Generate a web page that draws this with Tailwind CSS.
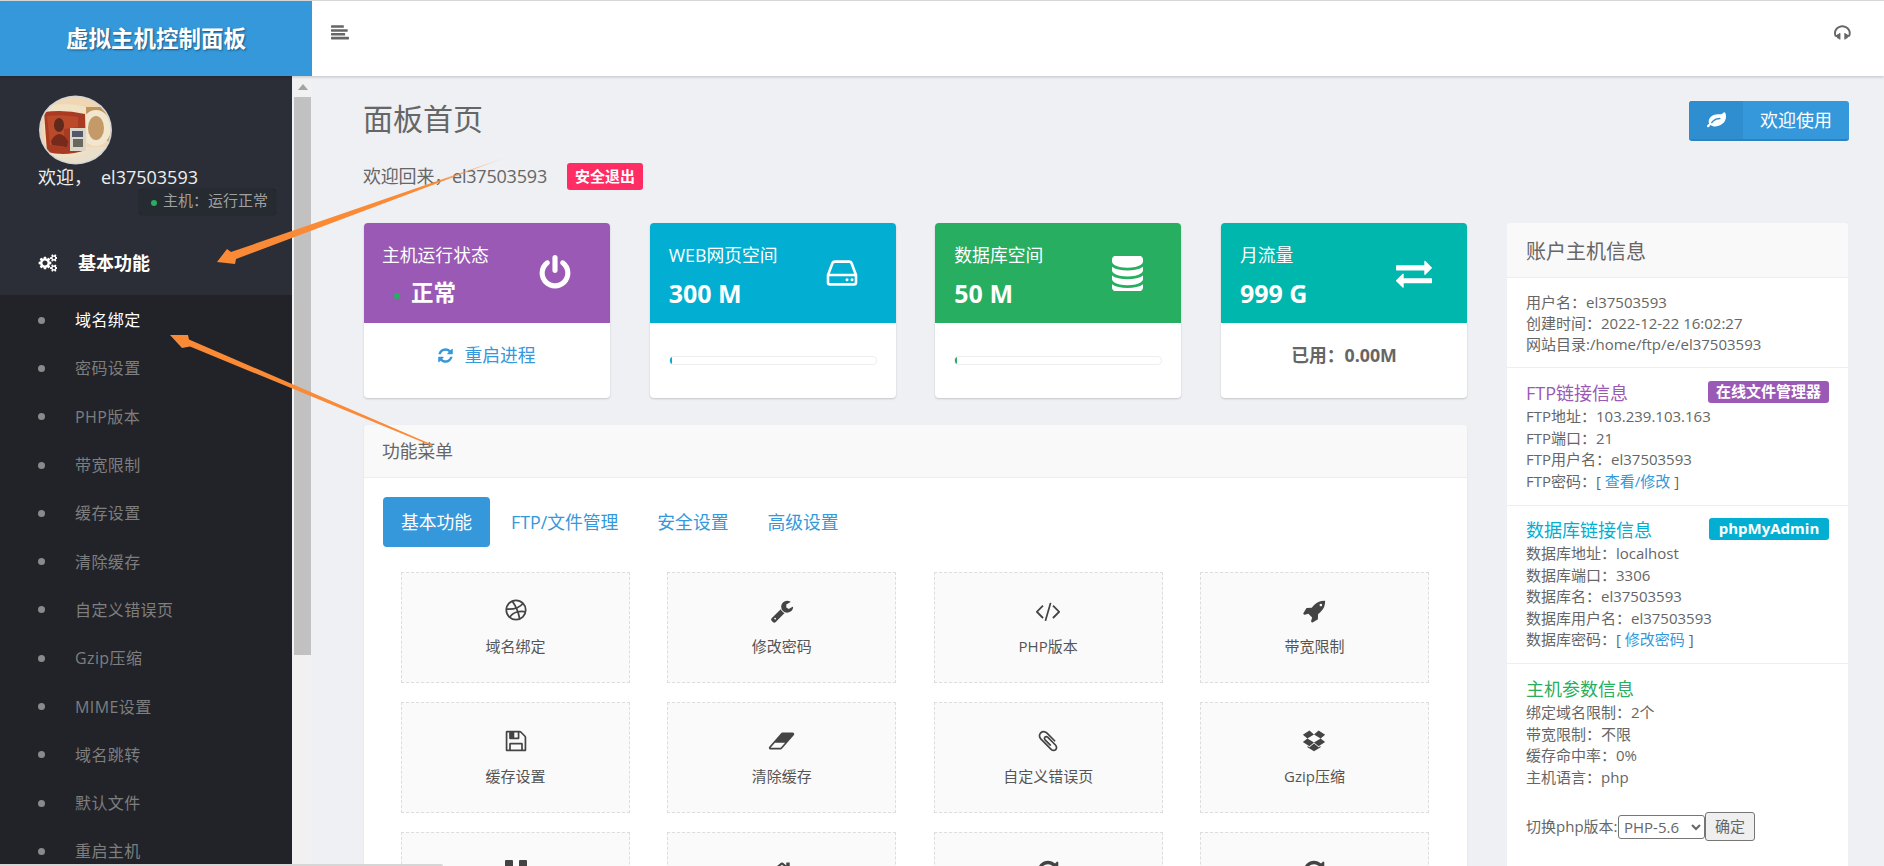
<!DOCTYPE html>
<html lang="zh-CN">

<head>
    <meta charset="UTF-8" />
    <meta name="viewport" content="width=device-width, initial-scale=1.0" />
    <title>虚拟主机控制面板</title>
    <script src="https://cdn.jsdelivr.net/npm/@tailwindcss/browser@4"></script>
</head>

<body class="relative h-[866px] w-[1884px] overflow-hidden bg-[#eef0f4] font-['Open_Sans','Noto_Sans_CJK_SC',sans-serif] text-[15px] text-[#666]">

    <div class="h-px bg-[#ddd]"></div>

    <!-- top bar -->
    <header class="relative z-10 flex h-[75px] bg-white shadow-[0_1px_3px_rgba(0,0,0,0.2)]">
        <div class="flex w-[312px] items-center justify-center text-[22.5px] font-bold text-white bg-[#3498db] [text-shadow:1px_1px_2px_rgba(0,0,0,0.45)]">虚拟主机控制面板</div>
        <div class="flex flex-1 items-center justify-between pl-[19px] pr-[32px] pb-[11px]">
            <svg class="h-[18px] w-[18px] fill-[#666]" viewBox="0 0 1792 1792"><path d="M1792 1344v128q0 26-19 45t-45 19h-1664q-26 0-45-19t-19-45v-128q0-26 19-45t45-19h1664q26 0 45 19t19 45zm-384-384v128q0 26-19 45t-45 19h-1280q-26 0-45-19t-19-45v-128q0-26 19-45t45-19h1280q26 0 45 19t19 45zm256-384v128q0 26-19 45t-45 19h-1536q-26 0-45-19t-19-45v-128q0-26 19-45t45-19h1536q26 0 45 19t19 45zm-384-384v128q0 26-19 45t-45 19h-1152q-26 0-45-19t-19-45v-128q0-26 19-45t45-19h1152q26 0 45 19t19 45z"/></svg>
            <svg class="h-[18px] w-[18px] fill-[#666]" viewBox="0 0 1792 1792"><path d="M1664 890q0 166-60 314l-20 49-185 33q-22 83-90.5 136.5t-156.5 53.5v32q0 14-9 23t-23 9h-64q-14 0-23-9t-9-23v-576q0-14 9-23t23-9h64q14 0 23 9t9 23v32q71 0 130 35.5t93 95.5l68-12q29-95 29-193 0-148-88-279t-236.5-209-315.5-78-315.5 78-236.5 209-88 279q0 98 29 193l68 12q34-60 93-95.5t130-35.5v-32q0-14 9-23t23-9h64q14 0 23 9t9 23v576q0 14-9 23t-23 9h-64q-14 0-23-9t-9-23v-32q-88 0-156.5-53.5t-90.5-136.5l-185-33-20-49q-60-148-60-314 0-151 67-291t179-242.5 266-163.5 320-61 320 61 266 163.5 179 242.5 67 291z"/></svg>
        </div>
    </header>

    <div class="flex h-[790px] overflow-hidden">
        <!-- sidebar -->
        <aside class="w-[292px] shrink-0 overflow-hidden bg-[#212329]">
            <div class="h-[219px] bg-[#2b2e37] pl-[38px] pt-[19px]">
                <svg class="block h-[70px] w-[75px]" viewBox="0 0 75 70">
                    <defs>
                        <clipPath id="avatarClip"><ellipse cx="37.5" cy="35" rx="35" ry="33" /></clipPath>
                        <filter id="avatarBlur"><feGaussianBlur stdDeviation="0.7" /></filter>
                    </defs>
                    <ellipse cx="37.5" cy="35" rx="36.5" ry="34.5" fill="#d5d5d5" />
                    <g clip-path="url(#avatarClip)">
                        <g filter="url(#avatarBlur)">
                            <rect width="75" height="70" fill="#eed7b2" />
                            <rect x="45" y="12" width="30" height="34" fill="#bf955f" />
                            <rect y="52" width="75" height="18" fill="#e9dfcb" />
                            <ellipse cx="58" cy="33" rx="15" ry="18" fill="#f2e6cf" />
                            <ellipse cx="58" cy="33" rx="8" ry="12" fill="#c39a68" />
                            <path d="M5 12 Q26 6 48 12 L49 58 Q28 66 8 60 Z" fill="#f1e2c6" />
                            <path d="M6 17 Q26 14 47 19 L48 55 Q28 62 9 57 Z" fill="#a83a22" />
                            <path d="M9 21 Q24 19 40 22 L40 32 L26 34 L26 52 L12 50 Z" fill="#bb4a2b" />
                            <ellipse cx="21" cy="30" rx="5" ry="7" fill="#5e2a1c" />
                            <path d="M13 46 Q21 32 30 46 L29 52 L14 50 Z" fill="#74291a" />
                            <rect x="32" y="33" width="16" height="23" fill="#dbd6c8" />
                            <rect x="34" y="36" width="11" height="6" fill="#55586a" />
                            <rect x="35" y="44" width="10" height="8" fill="#68685f" />
                        </g>
                    </g>
                </svg>
                <div class="flex h-[24px] items-center text-[18px] text-[#eee]">
                    <span class="w-[63px] shrink-0">欢迎，</span><span>el37503593</span>
                </div>
                <div class="ml-[101px] flex h-[26px] w-[137px] items-center rounded-[4px] bg-[#262a31] pb-[3px] pl-[12px] text-[15px] text-[#a0a0a0] shadow-[0_0_1px_rgba(0,0,0,0.6)]">
                    <span class="mr-[6px] mt-[5px] h-[6px] w-[6px] shrink-0 rounded-full bg-[#27ae60]"></span>主机：运行正常
                </div>
                <div class="mt-[37px] flex h-[22px] items-center text-[18px] font-bold text-white">
                    <svg class="mr-[21px] h-[18px] w-[19px] fill-white" viewBox="0 0 1920 1792"><path d="M960 896q0-106-75-181t-181-75-181 75-75 181 75 181 181 75 181-75 75-181zm768 512q0-52-38-90t-90-38-90 38-38 90q0 53 37.5 90.5t90.5 37.5 90.5-37.5 37.5-90.5zm0-1024q0-52-38-90t-90-38-90 38-38 90q0 53 37.5 90.5t90.5 37.5 90.5-37.5 37.5-90.5zm-384 421v185q0 10-7 19.5t-16 10.5l-155 24q-11 35-32 76 34 48 90 115 7 11 7 20 0 12-7 19-23 30-82.5 89.5t-78.5 59.5q-11 0-21-7l-115-90q-37 19-77 31-11 108-23 155-7 24-30 24h-186q-11 0-20-7.5t-10-17.5l-23-153q-34-10-75-31l-118 89q-7 7-20 7-11 0-21-8-144-133-144-160 0-9 7-19 10-14 41-53t47-61q-23-44-35-82l-152-24q-10-1-17-9.5t-7-19.5v-185q0-10 7-19.5t16-10.5l155-24q11-35 32-76-34-48-90-115-7-11-7-20 0-12 7-20 22-30 82-89t79-59q11 0 21 7l115 90q34-18 77-32 11-108 23-154 7-24 30-24h186q11 0 20 7.5t10 17.5l23 153q34 10 75 31l118-89q8-7 20-7 11 0 21 8 144 133 144 160 0 8-7 19-12 16-42 54t-45 60q23 48 34 82l152 23q10 2 17 10.5t7 19.5zm640 533v140q0 16-149 31-12 27-30 52 51 113 51 138 0 4-4 7-122 71-124 71-8 0-46-47t-52-68q-20 2-30 2t-30-2q-14 21-52 68t-46 47q-2 0-124-71-4-3-4-7 0-25 51-138-18-25-30-52-149-15-149-31v-140q0-16 149-31 13-29 30-52-51-113-51-138 0-4 4-7 4-2 35-20t59-34 30-16q8 0 46 46.5t52 67.5q20-2 30-2t30 2q51-71 92-112l6-2q4 0 124 70 4 3 4 7 0 25-51 138 17 23 30 52 149 15 149 31zm0-1024v140q0 16-149 31-12 27-30 52 51 113 51 138 0 4-4 7-122 71-124 71-8 0-46-47t-52-68q-20 2-30 2t-30-2q-14 21-52 68t-46 47q-2 0-124-71-4-3-4-7 0-25 51-138-18-25-30-52-149-15-149-31v-140q0-16 149-31 13-29 30-52-51-113-51-138 0-4 4-7 4-2 35-20t59-34 30-16q8 0 46 46.5t52 67.5q20-2 30-2t30 2q51-71 92-112l6-2q4 0 124 70 4 3 4 7 0 25-51 138 17 23 30 52 149 15 149 31z"/></svg>
                    基本功能
                </div>
            </div>
            <ul class="pt-px text-[16px] tracking-[0.4px] text-[#7e7e7e]">
                <li class="flex h-[48.3px] items-center pl-[38px] text-white"><span class="mr-[30px] h-[7px] w-[7px] rounded-full bg-[#8a8a8a]"></span>域名绑定</li>
                <li class="flex h-[48.3px] items-center pl-[38px]"><span class="mr-[30px] h-[7px] w-[7px] rounded-full bg-[#8a8a8a]"></span>密码设置</li>
                <li class="flex h-[48.3px] items-center pl-[38px]"><span class="mr-[30px] h-[7px] w-[7px] rounded-full bg-[#8a8a8a]"></span>PHP版本</li>
                <li class="flex h-[48.3px] items-center pl-[38px]"><span class="mr-[30px] h-[7px] w-[7px] rounded-full bg-[#8a8a8a]"></span>带宽限制</li>
                <li class="flex h-[48.3px] items-center pl-[38px]"><span class="mr-[30px] h-[7px] w-[7px] rounded-full bg-[#8a8a8a]"></span>缓存设置</li>
                <li class="flex h-[48.3px] items-center pl-[38px]"><span class="mr-[30px] h-[7px] w-[7px] rounded-full bg-[#8a8a8a]"></span>清除缓存</li>
                <li class="flex h-[48.3px] items-center pl-[38px]"><span class="mr-[30px] h-[7px] w-[7px] rounded-full bg-[#8a8a8a]"></span>自定义错误页</li>
                <li class="flex h-[48.3px] items-center pl-[38px]"><span class="mr-[30px] h-[7px] w-[7px] rounded-full bg-[#8a8a8a]"></span>Gzip压缩</li>
                <li class="flex h-[48.3px] items-center pl-[38px]"><span class="mr-[30px] h-[7px] w-[7px] rounded-full bg-[#8a8a8a]"></span>MIME设置</li>
                <li class="flex h-[48.3px] items-center pl-[38px]"><span class="mr-[30px] h-[7px] w-[7px] rounded-full bg-[#8a8a8a]"></span>域名跳转</li>
                <li class="flex h-[48.3px] items-center pl-[38px]"><span class="mr-[30px] h-[7px] w-[7px] rounded-full bg-[#8a8a8a]"></span>默认文件</li>
                <li class="flex h-[48.3px] items-center pl-[38px]"><span class="mr-[30px] h-[7px] w-[7px] rounded-full bg-[#8a8a8a]"></span>重启主机</li>
            </ul>
        </aside>

        <!-- sidebar scrollbar -->
        <div class="w-[20px] shrink-0 bg-[#f1f1f1] pl-[2px] pr-px">
            <div class="flex h-[21px] items-center justify-center">
                <span class="h-0 w-0 border-x-[5px] border-b-[6px] border-x-transparent border-b-[#a3a3a3]"></span>
            </div>
            <div class="h-[558px] bg-[#c1c1c1]"></div>
        </div>

        <main class="flex-1 overflow-hidden pl-[52px]">
            <div class="flex h-[147px] items-start justify-between pr-[35px] pt-[25px]">
                <div class="-ml-px">
                    <h1 class="h-[36px] text-[30px] font-normal leading-[36px] text-[#666]">面板首页</h1>
                    <div class="mt-[26px] flex h-[27px] items-center text-[18px]">
                        <span class="tracking-[-0.2px]">欢迎回来，el37503593</span>
                        <span class="ml-[20px] flex h-[27px] w-[76px] items-center justify-center rounded-[3px] bg-[#ff2d63] text-[15px] font-bold text-white">安全退出</span>
                    </div>
                </div>
                <div class="flex h-[40px] w-[160px] overflow-hidden rounded-[3px] border-b-2 border-[#2c82bf] bg-[#3498db] text-[18px] text-white">
                    <span class="flex w-[54px] items-center justify-center bg-[#2f8ed0]">
                        <svg class="h-[19px] w-[19px] fill-white" viewBox="0 0 1792 1792"><path d="M1280 704q0-26-19-45t-45-19q-172 0-318 49.5t-259.5 134-235.5 219.5q-19 21-19 45 0 26 19 45t45 19q24 0 45-19 27-24 74-71t67-66q137-124 268.5-176t313.5-52q26 0 45-19t19-45zm512-198q0 95-20 193-46 224-184.5 383t-357.5 268q-214 108-438 108-148 0-286-47-15-5-88-42t-96-37q-16 0-39.5 32t-45 70-52.5 70-60 32q-30 0-51-11t-31-24-27-42q-2-4-6-11t-5.5-10-3-9.5-1.5-13.5q0-35 31-73.5t68-65.5 68-56 31-48q0-4-14-38t-16-44q-9-51-9-104 0-115 43.5-220t119-184.5 170.5-139 204-95.5q55-18 145-25.5t179.5-9 178.5-6 163.5-24 113.5-56.5l29.5-29.5 29.5-28 27-20 36.5-16 43.5-4.5q39 0 70.5 46t47.5 112 24 124 8 96z"/></svg>
                    </span>
                    <span class="flex flex-1 items-center justify-center">欢迎使用</span>
                </div>
            </div>

            <div class="flex gap-[40px]">
                <div class="w-[1103px] shrink-0">
                    <!-- status cards -->
                    <div class="grid grid-cols-4 gap-x-[39.67px]">
                        <div class="h-[175px] overflow-hidden rounded-[4px] bg-white shadow-[0_1px_2px_rgba(0,0,0,0.18)]">
                            <div class="flex h-[100px] items-center justify-between bg-[#9b59b6] pl-[18px] pr-[37px] text-white">
                                <div class="self-start pt-[20px]">
                                    <div class="h-[24px] text-[17.8px] leading-[24px]">主机运行状态</div>
                                    <div class="mt-[11px] flex h-[30px] items-center pl-[12px] text-[22.5px] font-bold leading-[30px]">
                                        <span class="mr-[11px] mt-[5px] h-[6px] w-[6px] rounded-full bg-[#27ae60]"></span>正常
                                    </div>
                                </div>
                                <svg class="h-[36px] w-[36px] fill-white" viewBox="0 0 1792 1792"><path d="M1664 896q0 156-61 298t-164 245-245 164-298 61-298-61-245-164-164-245-61-298q0-182 80.5-343t226.5-270q43-32 95.5-25t83.5 50q32 42 24.5 94.5t-49.5 84.5q-98 74-151.5 181t-53.5 228q0 104 40.5 198.5t109.5 163.5 163.5 109.5 198.5 40.5 198.5-40.5 163.5-109.5 109.5-163.5 40.5-198.5q0-121-53.5-228t-151.5-181q-42-32-49.5-84.5t24.5-94.5q31-43 84-50t95 25q146 109 226.5 270t80.5 343zm-640-768v640q0 52-38 90t-90 38-90-38-38-90v-640q0-52 38-90t90-38 90 38 38 90z"/></svg>
                            </div>
                            <div class="flex h-[75px] items-center justify-center pb-[11px] pr-[1px] text-[17.8px] text-[#3498db]">
                                <svg class="mr-[10px] h-[17px] w-[17px] fill-[#3498db]" viewBox="0 0 1792 1792"><path d="M1639 1056q0 5-1 7-64 268-268 434.5t-478 166.5q-146 0-282.5-55t-243.5-157l-129 129q-19 19-45 19t-45-19-19-45v-448q0-26 19-45t45-19h448q26 0 45 19t19 45-19 45l-137 137q71 66 161 102t187 36q134 0 250-65t186-179q11-17 53-117 8-23 30-23h192q13 0 22.5 9.5t9.5 22.5zm25-800v448q0 26-19 45t-45 19h-448q-26 0-45-19t-19-45 19-45l138-138q-148-137-349-137-134 0-250 65t-186 179q-11 17-53 117-8 23-30 23h-199q-13 0-22.5-9.5t-9.5-22.5v-7q65-268 270-434.5t480-166.5q146 0 284 55.5t245 156.5l130-129q19-19 45-19t45 19 19 45z"/></svg>
                                重启进程
                            </div>
                        </div>

                        <div class="h-[175px] overflow-hidden rounded-[4px] bg-white shadow-[0_1px_2px_rgba(0,0,0,0.18)]">
                            <div class="flex h-[100px] items-center justify-between bg-[#02afd3] pl-[19px] pr-[38px] text-white">
                                <div class="self-start pt-[20px]">
                                    <div class="h-[24px] text-[17.8px] leading-[24px]">WEB网页空间</div>
                                    <div class="mt-[11px] h-[30px] text-[25px] font-bold leading-[30px]">300 M</div>
                                </div>
                                <svg class="h-[26px] w-[32px]" viewBox="0 0 32 26" fill="none" stroke="white" stroke-width="2.6" stroke-linejoin="round"><path d="M2 15 L6.5 3 Q7 1.6 9 1.6 H23 Q25 1.6 25.5 3 L30 15 V22.5 Q30 24.4 28 24.4 H4 Q2 24.4 2 22.5 Z" /><path d="M2 15 H30" /><circle cx="21" cy="19.7" r="1.5" fill="white" stroke="none" /><circle cx="26" cy="19.7" r="1.5" fill="white" stroke="none" /></svg>
                            </div>
                            <div class="flex h-[75px] items-center px-[19px]">
                                <div class="h-[9px] w-[208px] overflow-hidden rounded-[4px] border border-[#eee] bg-white">
                                    <div class="h-full bg-[#02afd3]" style="width:1%"></div>
                                </div>
                            </div>
                        </div>

                        <div class="h-[175px] overflow-hidden rounded-[4px] bg-white shadow-[0_1px_2px_rgba(0,0,0,0.18)]">
                            <div class="flex h-[100px] items-center justify-between bg-[#27ae60] pl-[19px] pr-[38px] text-white">
                                <div class="self-start pt-[20px]">
                                    <div class="h-[24px] text-[17.8px] leading-[24px]">数据库空间</div>
                                    <div class="mt-[11px] h-[30px] text-[25px] font-bold leading-[30px]">50 M</div>
                                </div>
                                <svg class="h-[35px] w-[31px] fill-white" viewBox="128 128 1536 1536" preserveAspectRatio="none"><path d="M896 768q237 0 443-43t325-127v170q0 69-103 128t-280 93.5-385 34.5-385-34.5-280-93.5-103-128v-170q119 84 325 127t443 43zm0 768q237 0 443-43t325-127v170q0 69-103 128t-280 93.5-385 34.5-385-34.5-280-93.5-103-128v-170q119 84 325 127t443 43zm0-384q237 0 443-43t325-127v170q0 69-103 128t-280 93.5-385 34.5-385-34.5-280-93.5-103-128v-170q119 84 325 127t443 43zm0-1152q208 0 385 34.5t280 93.5 103 128v128q0 69-103 128t-280 93.5-385 34.5-385-34.5-280-93.5-103-128v-128q0-69 103-128t280-93.5 385-34.5z"/></svg>
                            </div>
                            <div class="flex h-[75px] items-center px-[19px]">
                                <div class="h-[9px] w-[208px] overflow-hidden rounded-[4px] border border-[#eee] bg-white">
                                    <div class="h-full bg-[#27ae60]" style="width:1%"></div>
                                </div>
                            </div>
                        </div>

                        <div class="h-[175px] overflow-hidden rounded-[4px] bg-white shadow-[0_1px_2px_rgba(0,0,0,0.18)]">
                            <div class="flex h-[100px] items-center justify-between bg-[#00b7ad] pl-[19px] pr-[35px] text-white">
                                <div class="self-start pt-[20px]">
                                    <div class="h-[24px] text-[17.8px] leading-[24px]">月流量</div>
                                    <div class="mt-[11px] h-[30px] text-[25px] font-bold leading-[30px]">999 G</div>
                                </div>
                                <svg class="h-[36px] w-[36px] fill-white" viewBox="0 0 1792 1792"><path d="M1792 1184v192q0 13-9.5 22.5t-22.5 9.5h-1376v192q0 13-9.5 22.5t-22.5 9.5q-12 0-24-10l-319-320q-9-9-9-22 0-14 9-23l320-320q9-9 23-9 13 0 22.5 9.5t9.5 22.5v192h1376q13 0 22.5 9.5t9.5 22.5zm0-544q0 14-9 23l-320 320q-9 9-23 9-13 0-22.5-9.5t-9.5-22.5v-192h-1376q-13 0-22.5-9.5t-9.5-22.5v-192q0-13 9.5-22.5t22.5-9.5h1376v-192q0-14 9-23t23-9q12 0 24 10l319 319q9 9 9 23z"/></svg>
                            </div>
                            <div class="flex h-[75px] items-center justify-center pb-[11px] text-[17.8px] font-bold text-[#666]">已用：0.00M</div>
                        </div>
                    </div>

                    <!-- function menu -->
                    <section class="mt-[27px] h-[441px] overflow-hidden rounded-t-[4px] bg-white shadow-[0_1px_2px_rgba(0,0,0,0.1)]">
                        <div class="flex h-[53px] items-center rounded-t-[4px] border-b border-[#eee] bg-[#f9f9f9] px-[18px] text-[17.8px]">功能菜单</div>
                        <div class="px-[19px] pt-[19px]">
                            <div class="flex h-[50px] gap-[3px] text-[17.8px] text-[#3498db]">
                                <span class="flex w-[107px] items-center justify-center rounded-[4px] bg-[#3498db] text-white">基本功能</span>
                                <span class="flex items-center px-[18px]">FTP/文件管理</span>
                                <span class="flex items-center px-[18px]">安全设置</span>
                                <span class="flex items-center px-[18px]">高级设置</span>
                            </div>
                            <div class="ml-[18px] mt-[25px] grid w-[1028px] grid-cols-4 gap-x-[37.33px] gap-y-[19px] text-[#555]">
                                <div class="flex h-[111px] flex-col items-center border border-dashed border-[#ddd] bg-[#fafafa] pt-[26px]">
                                    <svg class="h-[22px] w-[22px]" viewBox="0 0 24 24" fill="none" stroke="#444" stroke-width="1.9"><circle cx="12" cy="12" r="10.6" /><path d="M8 2.4 C11 6.5 14.5 13.5 16 21.6" /><path d="M19.8 4.6 C16 9.5 9 11.5 1.6 11" /><path d="M22.6 14 C17 12.5 8.5 14 5 20.2" /></svg>
                                    <span class="mt-[15px] h-[20px] leading-[20px]">域名绑定</span>
                                </div>
                                <div class="flex h-[111px] flex-col items-center border border-dashed border-[#ddd] bg-[#fafafa] pt-[26px]">
                                    <svg class="h-[24px] w-[24px] fill-[#444]" viewBox="0 0 1792 1792"><path d="M448 1472q0-26-19-45t-45-19-45 19-19 45 19 45 45 19 45-19 19-45zm644-420l-682 682q-37 37-90 37-52 0-91-37l-106-108q-38-36-38-90 0-53 38-91l681-681q39 98 114.5 173.5t173.5 114.5zm634-435q0 39-23 106-47 134-164.5 217.5t-258.5 83.5q-185 0-316.5-131.5t-131.5-316.5 131.5-316.5 316.5-131.5q58 0 121.5 16.5t107.5 46.5q16 11 16 28t-16 28l-293 169v224l193 107q5-3 79-48.5t135.5-81 70.5-35.5q15 0 23.5 10t8.5 25z"/></svg>
                                    <span class="mt-[13px] h-[20px] leading-[20px]">修改密码</span>
                                </div>
                                <div class="flex h-[111px] flex-col items-center border border-dashed border-[#ddd] bg-[#fafafa] pt-[26px]">
                                    <svg class="h-[24px] w-[24px] fill-[#444]" viewBox="0 0 1792 1792"><path d="M553 1399l-50 50q-10 10-23 10t-23-10l-466-466q-10-10-10-23t10-23l466-466q10-10 23-10t23 10l50 50q10 10 10 23t-10 23l-393 393 393 393q10 10 10 23t-10 23zm591-1067l-373 1291q-4 13-15.5 19.5t-23.5 2.5l-62-17q-13-4-19.5-15.5t-2.5-24.5l373-1291q4-13 15.5-19.5t23.5-2.5l62 17q13 4 19.5 15.5t2.5 24.5zm657 651l-466 466q-10 10-23 10t-23-10l-50-50q-10-10-10-23t10-23l393-393-393-393q-10-10-10-23t10-23l50-50q10-10 23-10t23 10l466 466q10 10 10 23t-10 23z"/></svg>
                                    <span class="mt-[13px] h-[20px] leading-[20px]">PHP版本</span>
                                </div>
                                <div class="flex h-[111px] flex-col items-center border border-dashed border-[#ddd] bg-[#fafafa] pt-[26px]">
                                    <svg class="h-[24px] w-[24px] fill-[#444]" viewBox="0 0 1792 1792"><path d="M1504 448q0-40-28-68t-68-28-68 28-28 68 28 68 68 28 68-28 28-68zm224-288q0 249-75.5 430.5t-253.5 360.5q-81 80-195 176l-20 379q-2 16-16 26l-384 224q-7 4-16 4-12 0-23-9l-64-64q-13-14-8-32l85-276-281-281-276 85q-3 1-9 1-14 0-23-9l-64-64q-17-19-5-39l224-384q10-14 26-16l379-20q96-114 176-195 188-187 358-258t431-71q14 0 24 9.5t10 22.5z"/></svg>
                                    <span class="mt-[13px] h-[20px] leading-[20px]">带宽限制</span>
                                </div>
                                <div class="flex h-[111px] flex-col items-center border border-dashed border-[#ddd] bg-[#fafafa] pt-[26px]">
                                    <svg class="h-[24px] w-[24px] fill-[#444]" viewBox="0 0 1792 1792"><path d="M512 1536h768v-384h-768v384zm896 0h128v-896q0-14-10-38.5t-20-34.5l-281-281q-10-10-34-20t-39-10v416q0 40-28 68t-68 28h-576q-40 0-68-28t-28-68v-416h-128v1280h128v-416q0-40 28-68t68-28h832q40 0 68 28t28 68v416zm-384-928v-320q0-13-9.5-22.5t-22.5-9.5h-192q-13 0-22.5 9.5t-9.5 22.5v320q0 13 9.5 22.5t22.5 9.5h192q13 0 22.5-9.5t9.5-22.5zm640 32v928q0 40-28 68t-68 28h-1344q-40 0-68-28t-28-68v-1344q0-40 28-68t68-28h928q40 0 88 20t76 48l280 280q28 28 48 76t20 88z"/></svg>
                                    <span class="mt-[13px] h-[20px] leading-[20px]">缓存设置</span>
                                </div>
                                <div class="flex h-[111px] flex-col items-center border border-dashed border-[#ddd] bg-[#fafafa] pt-[26px]">
                                    <svg class="h-[24px] w-[27px] fill-[#444]" viewBox="0 0 2048 1792"><path d="M960 1408l336-384h-768l-336 384h768zm1013-1077q15 34 9.5 71.5t-30.5 65.5l-896 1024q-38 44-96 44h-768q-38 0-69.5-20.5t-47.5-54.5q-15-34-9.5-71.5t30.5-65.5l896-1024q38-44 96-44h768q38 0 70 20.5t47 54.5z"/></svg>
                                    <span class="mt-[13px] h-[20px] leading-[20px]">清除缓存</span>
                                </div>
                                <div class="flex h-[111px] flex-col items-center border border-dashed border-[#ddd] bg-[#fafafa] pt-[26px]">
                                    <svg class="h-[24px] w-[24px] fill-[#444]" viewBox="0 0 1792 1792"><path d="M1596 1385q0 117-79 196t-196 79q-135 0-235-100l-777-776q-113-115-113-271 0-159 110-270t269-111q158 0 273 113l605 606q10 10 10 22 0 16-30.5 46.5t-46.5 30.5q-13 0-23-10l-606-607q-79-77-181-77-106 0-179 75t-73 181q0 105 76 181l776 777q63 63 145 63 64 0 106-42t42-106q0-82-63-145l-581-581q-26-24-60-24-29 0-48 19t-19 48q0 32 25 59l410 410q10 10 10 22 0 16-31 47t-47 31q-12 0-22-10l-410-410q-63-61-63-149 0-82 57-139t139-57q88 0 149 63l581 581q100 98 100 235z"/></svg>
                                    <span class="mt-[13px] h-[20px] leading-[20px]">自定义错误页</span>
                                </div>
                                <div class="flex h-[111px] flex-col items-center border border-dashed border-[#ddd] bg-[#fafafa] pt-[26px]">
                                    <svg class="h-[24px] w-[24px] fill-[#444]" viewBox="0 0 1792 1792"><path d="M402 707l494 305-342 285-490-319zm986 555v108l-490 293v1l-1-1-1 1v-1l-489-293v-108l147 96 342-284v-2l1 1 1-1v2l343 284zm-834-1144l342 285-494 304-338-270zm836 589l338 271-489 319-343-285zm-151-589l489 319-338 270-494-304z"/></svg>
                                    <span class="mt-[13px] h-[20px] leading-[20px]">Gzip压缩</span>
                                </div>
                                <div class="flex h-[111px] flex-col items-center border border-dashed border-[#ddd] bg-[#fafafa] pt-[26px]">
                                    <svg class="h-[24px] w-[24px] fill-[#444]" viewBox="0 0 24 24"><rect x="1" y="1" width="8" height="22" rx="1" /><rect x="15" y="1" width="8" height="22" rx="1" /></svg>
                                </div>
                                <div class="flex h-[111px] flex-col items-center border border-dashed border-[#ddd] bg-[#fafafa] pt-[26px]">
                                    <svg class="h-[24px] w-[24px] fill-[#444]" viewBox="0 0 1792 1792"><path d="M1472 992v480q0 26-19 45t-45 19h-384v-384h-256v384h-384q-26 0-45-19t-19-45v-480q0-1 .5-3t.5-3l575-474 575 474q1 2 1 6zm223-69l-62 74q-8 9-21 11h-3q-13 0-21-7l-692-577-692 577q-12 8-24 7-13-2-21-11l-62-74q-8-10-7-23.5t11-21.5l719-599q32-26 76-26t76 26l244 204v-195q0-14 9-23t23-9h192q14 0 23 9t9 23v408l219 182q10 8 11 21.5t-7 23.5z"/></svg>
                                </div>
                                <div class="flex h-[111px] flex-col items-center border border-dashed border-[#ddd] bg-[#fafafa] pt-[26px]">
                                    <svg class="h-[24px] w-[24px] fill-[#444]" viewBox="0 0 1792 1792"><path d="M1664 256v448q0 26-19 45t-45 19h-448q-42 0-59-40-17-39 14-69l138-138q-148-137-349-137-104 0-198.5 40.5t-163.5 109.5-109.5 163.5-40.5 198.5 40.5 198.5 109.5 163.5 163.5 109.5 198.5 40.5q119 0 225-52t179-147q7-10 23-12 15 0 25 9l137 138q9 8 9.5 20.5t-7.5 22.5q-109 132-264 204.5t-327 72.5q-156 0-298-61t-245-164-164-245-61-298 61-298 164-245 245-164 298-61q147 0 284.5 55.5t244.5 156.5l130-129q29-31 70-14 39 17 39 59z"/></svg>
                                </div>
                                <div class="flex h-[111px] flex-col items-center border border-dashed border-[#ddd] bg-[#fafafa] pt-[26px]">
                                    <svg class="h-[24px] w-[24px] fill-[#444]" viewBox="0 0 1792 1792"><path d="M1664 256v448q0 26-19 45t-45 19h-448q-42 0-59-40-17-39 14-69l138-138q-148-137-349-137-104 0-198.5 40.5t-163.5 109.5-109.5 163.5-40.5 198.5 40.5 198.5 109.5 163.5 163.5 109.5 198.5 40.5q119 0 225-52t179-147q7-10 23-12 15 0 25 9l137 138q9 8 9.5 20.5t-7.5 22.5q-109 132-264 204.5t-327 72.5q-156 0-298-61t-245-164-164-245-61-298 61-298 164-245 245-164 298-61q147 0 284.5 55.5t244.5 156.5l130-129q29-31 70-14 39 17 39 59z"/></svg>
                                </div>
                            </div>
                        </div>
                    </section>
                </div>

                <!-- account info -->
                <aside class="h-[643px] w-[341px] shrink-0 rounded-t-[4px] bg-white leading-[21.5px]">
                    <div class="flex h-[55px] items-center rounded-t-[4px] border-b border-[#eee] bg-[#f9f9f9] px-[19px] pt-[3px] text-[20px]">账户主机信息</div>
                    <div class="h-[90px] border-b border-[#eee] px-[19px] pt-[14px] leading-[21px]">
                        <p>用户名：el37503593</p>
                        <p>创建时间：2022-12-22 16:02:27</p>
                        <p>网站目录:/home/ftp/e/el37503593</p>
                    </div>
                    <div class="h-[138px] border-b border-[#eee] px-[19px] pt-[13px]">
                        <div class="flex h-[25px] items-start justify-between">
                            <span class="text-[18px] leading-[25px] text-[#9b59b6]">FTP链接信息</span>
                            <span class="flex h-[22px] w-[121px] items-center justify-center rounded-[3px] bg-[#9b59b6] font-bold text-white">在线文件管理器</span>
                        </div>
                        <p>FTP地址：103.239.103.163</p>
                        <p>FTP端口：21</p>
                        <p>FTP用户名：el37503593</p>
                        <p>FTP密码：[ <span class="text-[#3498db]">查看/修改</span> ]</p>
                    </div>
                    <div class="h-[158px] border-b border-[#eee] px-[19px] pt-[12px]">
                        <div class="flex h-[25px] items-start justify-between">
                            <span class="text-[18px] leading-[25px] text-[#02afd3]">数据库链接信息</span>
                            <span class="flex h-[22px] w-[120px] items-center justify-center rounded-[3px] bg-[#02afd3] font-bold text-white">phpMyAdmin</span>
                        </div>
                        <p>数据库地址：localhost</p>
                        <p>数据库端口：3306</p>
                        <p>数据库名：el37503593</p>
                        <p>数据库用户名：el37503593</p>
                        <p>数据库密码：[ <span class="text-[#3498db]">修改密码</span> ]</p>
                    </div>
                    <div class="px-[19px] pt-[13px]">
                        <div class="h-[25px] text-[18px] leading-[25px] text-[#27ae60]">主机参数信息</div>
                        <p>绑定域名限制：2个</p>
                        <p>带宽限制：不限</p>
                        <p>缓存命中率：0%</p>
                        <p>主机语言：php</p>
                        <div class="mt-[24px] flex h-[29px] items-center">
                            <span class="w-[92px] shrink-0">切换php版本:</span>
                            <select class="h-[24px] w-[87px] rounded-[3px] border border-[#767676] bg-white pl-[1px] text-[15px] text-[#666]">
                                <option>PHP-5.6</option>
                            </select>
                            <button class="h-[29px] w-[50px] rounded-[3px] border border-[#767676] bg-[#efefef] text-[15px] text-[#666]">确定</button>
                        </div>
                    </div>
                </aside>
            </div>
        </main>
    </div>

    <!-- page scrollbar, only its top edge is in view -->
    <div class="absolute bottom-0 left-0 h-[2px] w-[443px] rounded-tr-[3px] bg-[#d6d6d6]"></div>

    <!-- orange annotation arrows -->
    <svg class="absolute left-0 top-0 z-20 h-[866px] w-[1884px]" viewBox="0 0 1884 866" fill="none">
        <defs>
            <linearGradient id="arrowOne" gradientUnits="userSpaceOnUse" x1="507" y1="157" x2="217" y2="262">
                <stop offset="0" stop-color="#fa8a36" stop-opacity="0.1" />
                <stop offset="0.25" stop-color="#fa8a36" />
            </linearGradient>
        </defs>
        <polygon points="507,157 231,252 227,249 217,262 235,264 236,259" fill="url(#arrowOne)" />
        <polygon points="433,445 432,446 190,346.5 182,348 170,335 188,335 189,339.5" fill="#fa8a36" />
    </svg>

</body>

</html>
